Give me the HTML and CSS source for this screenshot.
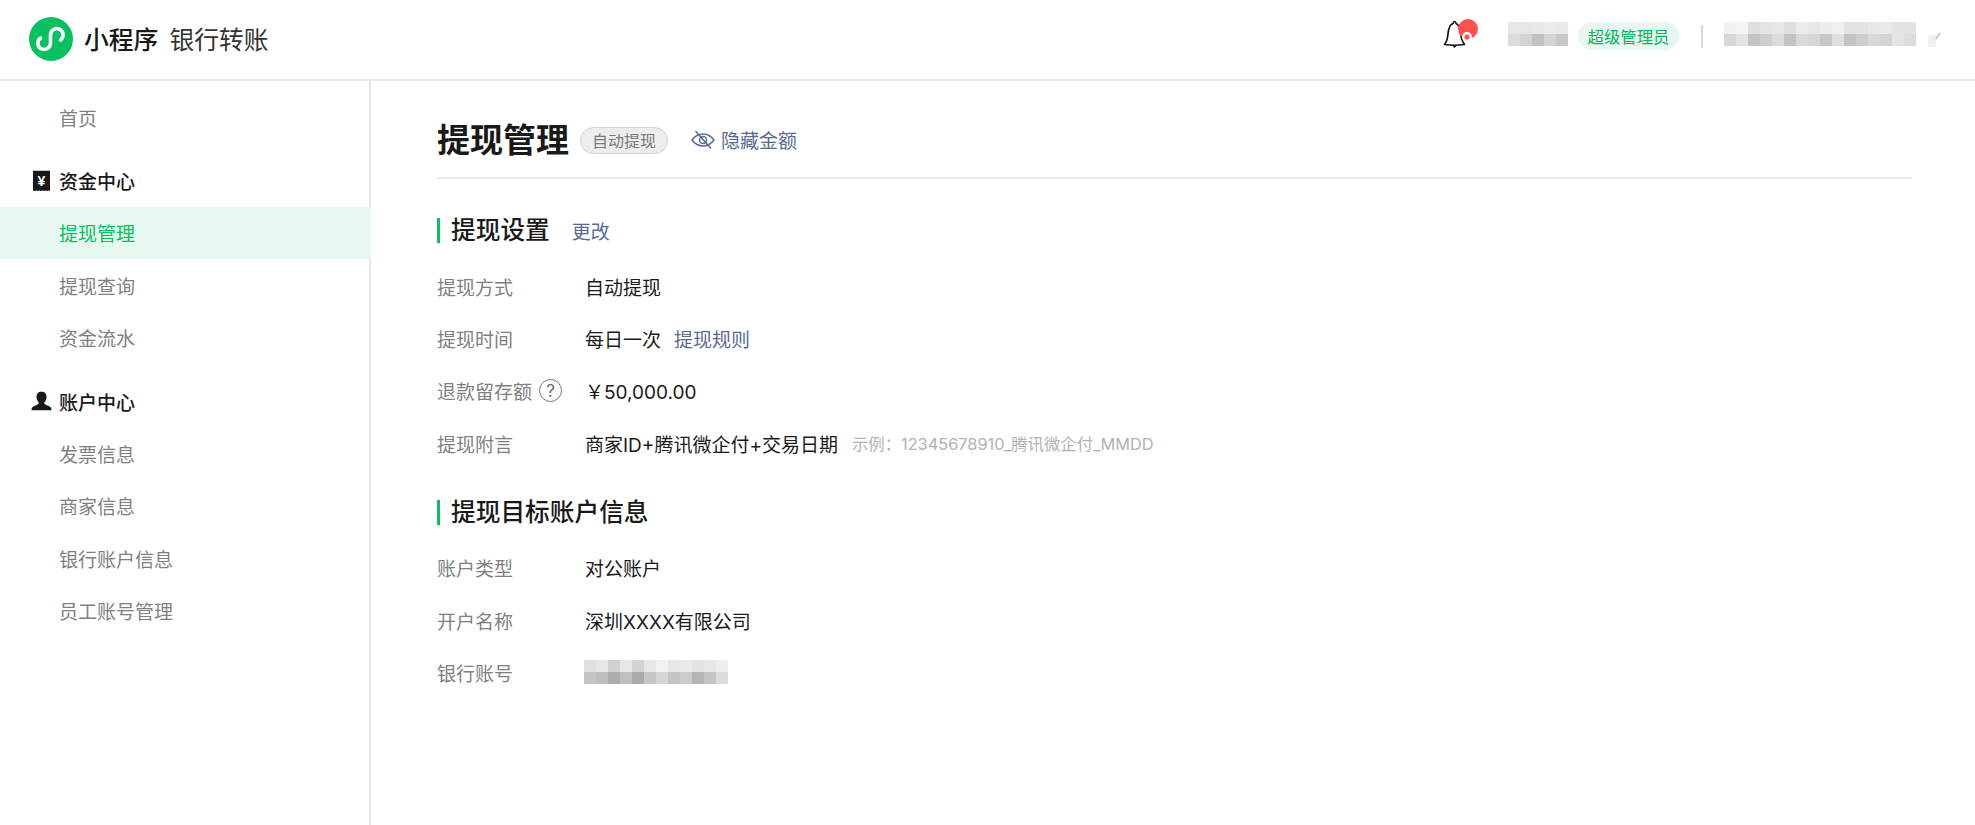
FILE: index.html
```html
<!DOCTYPE html>
<html lang="zh-CN">
<head>
<meta charset="utf-8">
<title>提现管理</title>
<link rel="stylesheet" href="styles.css">
</head>
<body>
<div class="app">
  <header class="topbar">
    <div class="brand">
      <svg class="logo" viewBox="0 0 44 44" aria-hidden="true">
        <circle cx="22" cy="22" r="22" fill="#07c160"/>
        <path d="M11.500 21A6.300 6.300 0 1 0 21.500 26.300V17.700A6.300 6.300 0 1 1 31.500 23" fill="none" stroke="#fff" stroke-width="3.600" stroke-linecap="round"/>
      </svg>
      <span class="brand-name">小程序</span>
      <span class="brand-sub">银行转账</span>
    </div>
    <div class="account">
      <div class="bell">
        <svg class="bell-icon" viewBox="0 0 36 30" aria-hidden="true">
          <path d="M1.5 25.5C4 23 4.500 20 5 15C5.500 9 7 5.500 10 4.500C10.500 1.800 12.700 1.800 13 4.500C15.500 5.500 17 8 17.500 13C18 19 19.500 23 21.500 25.500C15 26.500 8 26.500 1.500 25.500Z" fill="none" stroke="#111" stroke-width="1.700" stroke-linejoin="round"/>
          <path d="M9.500 27H13.500L11.500 29Z" fill="#111"/>
          <circle cx="25" cy="10" r="10" fill="#fa5151"/>
          <circle cx="24" cy="18" r="3.800" fill="#fa5151" stroke="#fff" stroke-width="2.400"/>
        </svg>
      </div>
      <svg class="mosaic mosaic-name" viewBox="0 0 55 24" preserveAspectRatio="none" shape-rendering="crispEdges" aria-hidden="true">
        <rect x="0" y="0" width="11" height="12" fill="#e6e6e6"/><rect x="11" y="0" width="11" height="12" fill="#e6e6e6"/><rect x="22" y="0" width="11" height="12" fill="#e8e8e8"/><rect x="33" y="0" width="11" height="12" fill="#ebebeb"/><rect x="44" y="0" width="11" height="12" fill="#eaeaea"/>
        <rect x="0" y="12" width="11" height="12" fill="#dcdcdc"/><rect x="11" y="12" width="11" height="12" fill="#d2d2d2"/><rect x="22" y="12" width="11" height="12" fill="#c2c2c2"/><rect x="33" y="12" width="11" height="12" fill="#d4d4d4"/><rect x="44" y="12" width="11" height="12" fill="#c8c8c8"/>
      </svg>
      <span class="role">超级管理员</span>
      <span class="vline"></span>
      <svg class="mosaic mosaic-merchant" viewBox="0 0 176 24" preserveAspectRatio="none" shape-rendering="crispEdges" aria-hidden="true">
        <rect x="0" y="0" width="11" height="12" fill="#f1f1f1"/><rect x="11" y="0" width="11" height="12" fill="#f4f4f4"/><rect x="22" y="0" width="11" height="12" fill="#dedede"/><rect x="33" y="0" width="11" height="12" fill="#e4e4e4"/><rect x="44" y="0" width="11" height="12" fill="#e7e7e7"/><rect x="55" y="0" width="11" height="12" fill="#dedede"/><rect x="66" y="0" width="11" height="12" fill="#ececec"/><rect x="77" y="0" width="11" height="12" fill="#e7e7e7"/><rect x="88" y="0" width="11" height="12" fill="#ececec"/><rect x="99" y="0" width="11" height="12" fill="#f0f0f0"/><rect x="110" y="0" width="11" height="12" fill="#e2e2e2"/><rect x="121" y="0" width="11" height="12" fill="#e3e3e3"/><rect x="132" y="0" width="11" height="12" fill="#e7e7e7"/><rect x="143" y="0" width="11" height="12" fill="#e9e9e9"/><rect x="154" y="0" width="22" height="12" fill="#e3e3e3"/>
        <rect x="0" y="12" width="11" height="12" fill="#d7d7d7"/><rect x="11" y="12" width="11" height="12" fill="#e3e3e3"/><rect x="22" y="12" width="11" height="12" fill="#c3c3c3"/><rect x="33" y="12" width="11" height="12" fill="#cecece"/><rect x="44" y="12" width="11" height="12" fill="#dcdcdc"/><rect x="55" y="12" width="11" height="12" fill="#c4c4c4"/><rect x="66" y="12" width="11" height="12" fill="#d9d9d9"/><rect x="77" y="12" width="11" height="12" fill="#d6d6d6"/><rect x="88" y="12" width="11" height="12" fill="#c7c7c7"/><rect x="99" y="12" width="11" height="12" fill="#dfdfdf"/><rect x="110" y="12" width="11" height="12" fill="#c3c3c3"/><rect x="121" y="12" width="11" height="12" fill="#cdcdcd"/><rect x="132" y="12" width="11" height="12" fill="#d8d8d8"/><rect x="143" y="12" width="11" height="12" fill="#d3d3d3"/><rect x="154" y="12" width="11" height="12" fill="#e4e4e4"/><rect x="165" y="12" width="11" height="12" fill="#dcdcdc"/>
      </svg>
      <svg class="mosaic mosaic-arrow" viewBox="0 0 13 15" aria-hidden="true">
        <rect x="0" y="3" width="8" height="12" fill="#f0f0f0"/>
        <path d="M8 7L12 1" stroke="#bdbdbd" stroke-width="1.500" fill="none"/>
      </svg>
    </div>
  </header>
  <div class="body">
    <nav class="sidebar">
      <div class="nav-group">
        <a class="nav-item">首页</a>
      </div>
      <div class="nav-group">
        <div class="nav-head">
          <span class="nav-icon">
            <svg class="receipt" viewBox="0 0 17 21" aria-hidden="true">
              <path d="M0 0H17V20.500L15.500 20L14 20.500L12.500 20L11 20.500L9.500 20L8 20.500L6.500 20L5 20.500L3.500 20L2 20.500L0 20Z" fill="#191919"/>
              <text x="8.500" y="15" text-anchor="middle" class="receipt-text">¥</text>
            </svg>
          </span>
          资金中心
        </div>
        <a class="nav-item is-active">提现管理</a>
        <a class="nav-item">提现查询</a>
        <a class="nav-item">资金流水</a>
      </div>
      <div class="nav-group">
        <div class="nav-head">
          <span class="nav-icon">
            <svg class="person" viewBox="0 0 21 19" aria-hidden="true">
              <path d="M10.500 0C7 0 5.500 2.700 5.500 5.500C5.500 8 6.500 10 7.800 11C8 12.500 6.500 13.300 4 14.200C1.700 15 .5 15.800 .5 19H20.500C20.500 15.800 19.300 15 17 14.200C14.500 13.300 13 12.500 13.200 11C14.500 10 15.500 8 15.500 5.500C15.500 2.700 14 0 10.500 0Z" fill="#191919"/>
            </svg>
          </span>
          账户中心
        </div>
        <a class="nav-item">发票信息</a>
        <a class="nav-item">商家信息</a>
        <a class="nav-item">银行账户信息</a>
        <a class="nav-item">员工账号管理</a>
      </div>
    </nav>
    <main class="content">
      <div class="page-head">
        <h1 class="page-title">提现管理</h1>
        <span class="tag">自动提现</span>
        <a class="link eye-link">
          <svg class="eye" viewBox="0 0 24 20" aria-hidden="true">
            <path d="M1 10C4 6 8 4 12 4C16 4 20 6 23 10C20 14 16 16 12 16C8 16 4 14 1 10Z" fill="none" stroke="#576b95" stroke-width="1.500"/>
            <circle cx="12" cy="10" r="3.500" fill="none" stroke="#576b95" stroke-width="1.500"/>
            <path d="M4.500 1L20 18.500" stroke="#576b95" stroke-width="1.500"/>
          </svg>
          隐藏金额
        </a>
      </div>
      <section class="section">
        <div class="section-head">
          <h2 class="section-title">提现设置</h2>
          <a class="link section-link">更改</a>
        </div>
        <div class="row"><span class="label">提现方式</span><span class="value">自动提现</span></div>
        <div class="row"><span class="label">提现时间</span><span class="value">每日一次</span><a class="link rule-link">提现规则</a></div>
        <div class="row"><span class="label">退款留存额<span class="help">?</span></span><span class="value">￥50,000.00</span></div>
        <div class="row"><span class="label">提现附言</span><span class="value">商家ID+腾讯微企付+交易日期</span><span class="hint">示例：12345678910_腾讯微企付_MMDD</span></div>
      </section>
      <section class="section section-second">
        <div class="section-head">
          <h2 class="section-title">提现目标账户信息</h2>
        </div>
        <div class="row"><span class="label">账户类型</span><span class="value">对公账户</span></div>
        <div class="row"><span class="label">开户名称</span><span class="value">深圳XXXX有限公司</span></div>
        <div class="row"><span class="label">银行账号</span>
          <svg class="mosaic mosaic-bank" viewBox="0 0 144 24" shape-rendering="crispEdges" aria-hidden="true">
            <rect x="0" y="0" width="12" height="12" fill="#e0e0e0"/><rect x="12" y="0" width="12" height="12" fill="#e6e6e6"/><rect x="24" y="0" width="12" height="12" fill="#d0d0d0"/><rect x="36" y="0" width="12" height="12" fill="#e6e6e6"/><rect x="48" y="0" width="12" height="12" fill="#d3d3d3"/><rect x="60" y="0" width="12" height="12" fill="#e6e6e6"/><rect x="72" y="0" width="12" height="12" fill="#f2f2f2"/><rect x="84" y="0" width="12" height="12" fill="#e6e6e6"/><rect x="96" y="0" width="12" height="12" fill="#eaeaea"/><rect x="108" y="0" width="12" height="12" fill="#e2e2e2"/><rect x="120" y="0" width="12" height="12" fill="#e6e6e6"/><rect x="132" y="0" width="12" height="12" fill="#eeeeee"/>
            <rect x="0" y="12" width="12" height="12" fill="#c4c4c4"/><rect x="12" y="12" width="12" height="12" fill="#bebebe"/><rect x="24" y="12" width="12" height="12" fill="#aeaeae"/><rect x="36" y="12" width="12" height="12" fill="#c0c0c0"/><rect x="48" y="12" width="12" height="12" fill="#aaaaaa"/><rect x="60" y="12" width="12" height="12" fill="#c6c6c6"/><rect x="72" y="12" width="12" height="12" fill="#d6d6d6"/><rect x="84" y="12" width="12" height="12" fill="#c4c4c4"/><rect x="96" y="12" width="12" height="12" fill="#cccccc"/><rect x="108" y="12" width="12" height="12" fill="#b4b4b4"/><rect x="120" y="12" width="12" height="12" fill="#c4c4c4"/><rect x="132" y="12" width="12" height="12" fill="#dcdcdc"/>
          </svg>
        </div>
      </section>
    </main>
  </div>
</div>
</body>
</html>
```
FILE: styles.css
```css
* { box-sizing: border-box; }
html, body { margin: 0; padding: 0; height: 100%; background: #fff; }
body {
  font-family: Inter, "Noto Sans CJK SC", sans-serif;
  font-size: 19px;
  color: #1a1a1a;
  overflow: hidden;
}
.app { display: flex; flex-direction: column; height: 100vh; }

.topbar {
  flex: none;
  height: 81px;
  display: flex;
  align-items: center;
  justify-content: space-between;
  padding: 0 34px 1px 29px;
  border-bottom: 2px solid #e9e9e9;
}
.brand { display: flex; align-items: center; }
.logo { width: 44px; height: 44px; display: block; }
.brand-name { margin-left: 11px; margin-bottom: 2px; font-size: 24.800px; font-weight: 500; color: #191919; }
.brand-sub { margin-left: 11px; margin-bottom: 2px; font-size: 24.800px; color: #333; }
.account { display: flex; align-items: center; margin-bottom: 6px; }
.bell { width: 65px; margin-bottom: 4px; }
.bell-icon { display: block; width: 36px; height: 30px; }
.mosaic { display: block; }
.mosaic-name { width: 60px; height: 24px; margin-bottom: 4px; }
.role {
  margin-left: 10px;
  height: 28px;
  width: 101px;
  display: flex;
  align-items: center;
  justify-content: center;
  border-radius: 14px;
  background: #e7f8f0;
  color: #07b45a;
  font-size: 16.400px;
}
.vline { margin: 0 21px 0 22px; width: 2px; height: 23px; background: #d8d8d8; }
.mosaic-merchant { width: 192px; height: 24px; margin-bottom: 4px; }
.mosaic-arrow { width: 13px; height: 15px; margin: 6px 0 0 12px; }

.body { flex: 1; display: flex; min-height: 0; }
.sidebar {
  flex: none;
  width: 371px;
  padding-top: 10px;
  border-right: 2px solid #e6e6e6;
}
.nav-group { margin-bottom: 11px; }
.nav-item, .nav-head {
  display: flex;
  align-items: center;
  height: 52.4px;
  padding-left: 59px;
}
.nav-item { color: #7f7f7f; }
.nav-head { position: relative; color: #191919; font-weight: 500; }
.nav-icon { position: absolute; left: 31px; top: 50%; transform: translateY(-50%); width: 21px; height: 21px; display: flex; align-items: center; justify-content: center; }
.receipt { width: 17px; height: 21px; display: block; }
.receipt-text { fill: #fff; font-size: 14px; font-weight: 700; font-family: "Liberation Sans", sans-serif; }
.person { width: 21px; height: 19px; display: block; }
.nav-item.is-active { background: #e7f8f0; color: #07c160; margin-right: -2px; position: relative; }

.content { flex: 1; padding: 32px 63px 0 66px; min-width: 0; }
.page-head {
  display: flex;
  align-items: center;
  height: 66px;
  border-bottom: 2px solid #ebebeb;
  padding-bottom: 9px;
}
.page-title { margin: 0; font-size: 33px; font-weight: 600; color: #191919; line-height: 1; }
.tag {
  margin-left: 11px;
  margin-bottom: 1px;
  width: 88px;
  height: 27px;
  display: flex;
  align-items: center;
  justify-content: center;
  border: 1px solid #d2d2d2;
  border-radius: 14px;
  background: #ededed;
  color: #7a7a7a;
  font-size: 16px;
}
.link { color: #576b95; }
.eye-link { margin-left: 23px; margin-bottom: 2px; display: flex; align-items: center; }
.eye { width: 24px; height: 20px; margin-right: 6px; display: block; }

.section { margin-top: 25px; }
.section-second { margin-top: 17px; }
.section-head { display: flex; align-items: center; height: 52px; margin-bottom: 4px; }
.section-title {
  margin: 0;
  height: 25px;
  padding-left: 11px;
  border-left: 3px solid #07c160;
  font-size: 24.700px;
  font-weight: 500;
  line-height: 25px;
  color: #191919;
}
.section-link { margin-left: 22px; }
.section-second .section-head { margin-bottom: 3px; }
.row { display: flex; align-items: center; height: 52.4px; }
.label { width: 148px; flex: none; color: #7f7f7f; display: flex; align-items: center; }
.help {
  margin-left: 7px;
  width: 23px;
  height: 23px;
  border: 1.500px solid #777;
  border-radius: 50%;
  color: #666;
  font-size: 17px;
  display: flex;
  align-items: center;
  justify-content: center;
}
.rule-link { margin-left: 13px; }
.hint { margin-left: 14px; font-size: 16.350px; color: #b2b2b2; }
.mosaic-bank { width: 144px; height: 24px; margin: -2px 0 0 -1px; }
```
